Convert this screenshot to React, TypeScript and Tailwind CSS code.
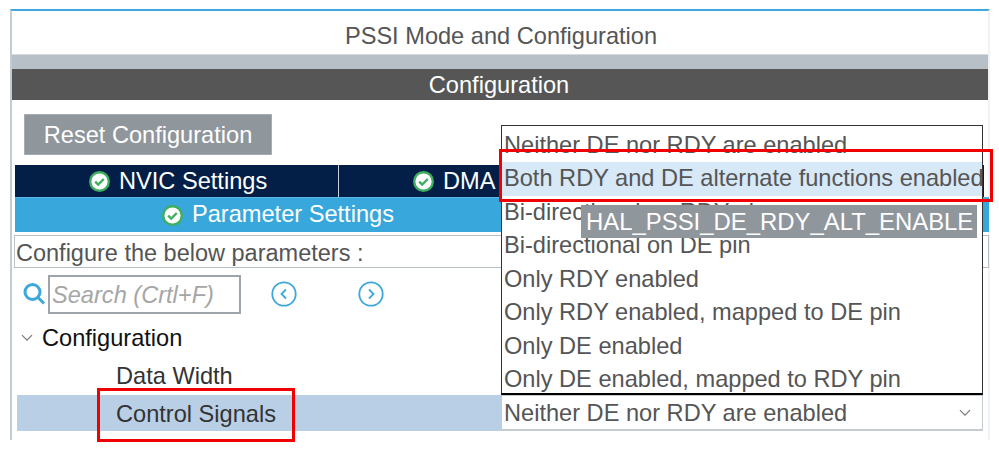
import React from "react";

const font = { fontFamily: '"Liberation Sans", Arial, sans-serif' };

function Check() {
  return (
    <svg width="21" height="21" viewBox="0 0 21 21" className="shrink-0">
      <circle cx="10.5" cy="10.5" r="9.3" fill="#ffffff" stroke="#3fae5f" strokeWidth="2.4" />
      <path d="M6.2 10.6l3 3 5.6-5.6" fill="none" stroke="#3fae5f" strokeWidth="2.4" />
    </svg>
  );
}

function Nav({ left }: { left?: boolean }) {
  return (
    <svg width="26" height="26" viewBox="0 0 26 26">
      <circle cx="13" cy="13" r="11.7" fill="none" stroke="#3ea8dc" strokeWidth="1.8" />
      <path d={left ? "M15 8.5L10.5 13l4.5 4.5" : "M11 8.5l4.5 4.5L11 17.5"} fill="none" stroke="#3ea8dc" strokeWidth="1.8" />
    </svg>
  );
}

function Chevron() {
  return (
    <svg width="12" height="8" viewBox="0 0 12 8">
      <path d="M1 1.2l5 5 5-5" fill="none" stroke="#777" strokeWidth="1.2" />
    </svg>
  );
}

const options = [
  "Neither DE nor RDY are enabled",
  "Both RDY and DE alternate functions enabled",
  "Bi-directional on RDY pin",
  "Bi-directional on DE pin",
  "Only RDY enabled",
  "Only RDY enabled, mapped to DE pin",
  "Only DE enabled",
  "Only DE enabled, mapped to RDY pin",
];

export default function App() {
  return (
    <div className="relative w-[999px] h-[452px] overflow-hidden bg-white pl-[10px] pt-[9px] text-[23.6px] text-[#555555]" style={font}>
      <div className="w-[980px] h-[431px] border-l-2 border-t-2 border-r-2 border-l-[#c3ccd2] border-t-[#3fa9de] border-r-[#f0f2f4] flex flex-col">
        <div className="h-[44px] shrink-0 flex items-center justify-center pt-[8px] pl-[2px] border-b border-[#d5dadd]">PSSI Mode and Configuration</div>
        <div className="h-[14px] shrink-0 bg-[#b6c0c6]" />
        <div className="h-[31px] shrink-0 bg-[#555655] text-white flex items-center justify-center pt-[2px] pr-[2px]">Configuration</div>

        <div className="pl-[12px] pt-[14px] shrink-0">
          <div className="w-[248px] h-[41px] bg-[#8f969c] border border-[#a6acb1] text-white flex items-center justify-center pt-[2px]">Reset Configuration</div>
        </div>

        <div className="ml-[3px] mt-[10px] w-[969px] h-[32px] shrink-0 bg-[#031f47] text-white flex">
          <div className="w-[324px] h-full border-r border-[#c9d0d8] flex items-center pl-[74px] gap-[9px] pt-[1px]">
            <Check />
            <span>NVIC Settings</span>
          </div>
          <div className="pl-[74px] h-full flex items-center gap-[9px] pt-[1px]">
            <Check />
            <span>DMA Settings</span>
          </div>
        </div>
        <div className="ml-[3px] w-[974px] h-[35px] shrink-0 bg-[#38a7db] border-t border-[#5cb6e2] text-white flex items-center pl-[147px] gap-[9px]">
          <Check />
          <span>Parameter Settings</span>
        </div>

        <div className="ml-[2px] mt-[3px] w-[975px] h-[33px] shrink-0 border border-[#b8bfc4] flex items-center pl-[1px] pt-[4px] text-[23.5px]">Configure the below parameters :</div>

        <div className="flex items-center mt-[6px] pl-[10px] h-[40px] shrink-0">
          <svg width="24" height="24" viewBox="0 0 24 24" className="shrink-0">
            <circle cx="10.5" cy="10" r="7.5" fill="none" stroke="#3ea8dc" strokeWidth="3" />
            <path d="M16 15.5l6 6" stroke="#3ea8dc" strokeWidth="3" />
          </svg>
          <div className="ml-[2px] w-[193px] h-[39px] border-2 border-[#9ea5aa] flex items-center pl-[2px] pt-[3px] italic text-[#a6a6a6]">Search (Crtl+F)</div>
          <div className="ml-[30px] flex"><Nav left /></div>
          <div className="ml-[61px] flex"><Nav /></div>
        </div>

        <div className="flex items-center mt-[4px] h-[39px] shrink-0 pl-[9px] text-[#111111]">
          <Chevron />
          <span className="ml-[9px] pt-[2px]">Configuration</span>
        </div>
        <div className="h-[38px] shrink-0 pl-[104px] pt-[2px] flex items-center text-[#333333]">Data Width</div>
        <div className="ml-[5px] w-[966px] h-[36px] shrink-0 bg-[#b8cfe5] flex items-stretch text-[#333333]">
          <div className="w-[484px] pl-[99px] pt-[3px] flex items-center">Control Signals</div>
          <div className="flex-1 bg-white border border-[#c5cbcf] border-b-2 flex items-center justify-between pl-[2px] pr-[11px] text-[#555555]">
            <span className="pt-[3px]">Neither DE nor RDY are enabled</span>
            <Chevron />
          </div>
        </div>
      </div>

      <div className="absolute left-[501px] top-[125px] w-[482px] h-[270px] bg-white border border-[#333333] border-b-2 border-b-black leading-[33.45px] whitespace-nowrap pl-[2px] pt-[3px]">
        {options.map((o, i) => (
          <div key={o} className={i === 1 ? "h-[33.45px] -ml-[2px] pl-[2px] bg-[#d7e8f6]" : "h-[33.45px]"}>{o}</div>
        ))}
      </div>

      <div className="absolute left-[581px] top-[205px] w-[396px] h-[33px] bg-[#8f969c] text-white text-[23.9px] flex items-center pl-[5px] whitespace-nowrap">HAL_PSSI_DE_RDY_ALT_ENABLE</div>

      <div className="absolute left-[499px] top-[149px] w-[494px] h-[53px] border-[3px] border-[#f00000]" />
      <div className="absolute left-[97px] top-[388px] w-[198px] h-[54px] border-[3px] border-[#f00000]" />
    </div>
  );
}
